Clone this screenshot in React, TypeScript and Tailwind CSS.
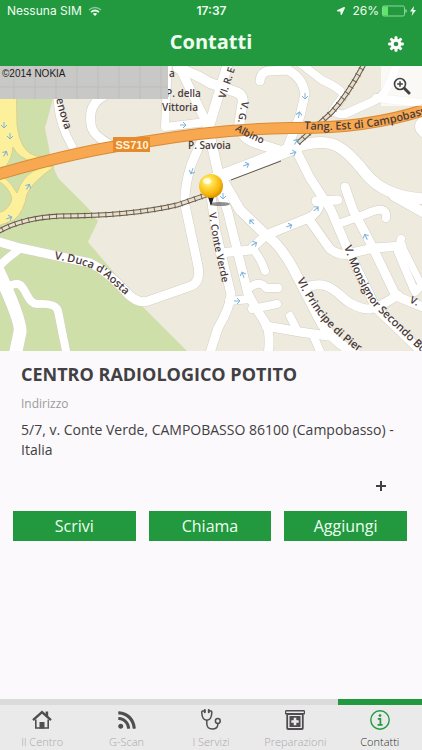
import type { ReactNode } from "react";
import { FaLocationArrow, FaRss } from "react-icons/fa";

interface Road {
  d: string;
  w: number;
}

const ROADS: Road[] = [
  { d: "M54 60 L58 104 Q60 126 72 146", w: 8 },
  { d: "M104 96 Q88 104 91 124 Q92 136 113 146", w: 9 },
  { d: "M168 60 L165 127 L206 122", w: 8 },
  { d: "M176 60 L209 128", w: 9 },
  { d: "M178 68 Q196 74 210 83 L236 92 Q245 95 242 106 L239 126 Q242 138 256 143 L284 152", w: 10 },
  { d: "M229 60 L211 120 L206 136", w: 10 },
  { d: "M260 81 Q261 72 268 71 L288 70 Q303 78 305 94 L300 116 L288 146", w: 9 },
  { d: "M296 60 L322 80 Q348 92 342 98 L333 110 Q336 115 345 114 L376 100 Q388 94 398 60", w: 8 },
  { d: "M376 98 L422 103", w: 8 },
  { d: "M428 118 Q416 122 420 130 L430 140", w: 8 },
  { d: "M207 128 L191 165 Q184 188 185 205 L198 266 Q201 282 191 286 L148 301 Q138 304 128 294 Q106 270 90 263 L20 248 L-4 241", w: 9 },
  { d: "M20 249 Q4 260 -4 270", w: 8 },
  { d: "M-4 266 Q22 322 20 332 L15 356", w: 13 },
  { d: "M8 294 Q7 284 17 284 C26 284 26 304 38 304 Q56 303 58 311 L67 356", w: 8 },
  { d: "M209 132 L218 172 L240 210 L266 235 Q282 246 296 274 L322 324 Q334 342 356 354", w: 10 },
  { d: "M214 179 L256 163 L296 147", w: 13 },
  { d: "M286 150 Q316 139 332 144 Q346 148 366 174 Q386 198 428 199", w: 11 },
  { d: "M394 196 L430 216", w: 10 },
  { d: "M296 150 L310 178 L331 210 L347 248 L376 308 L428 358", w: 9 },
  { d: "M345 187 L353 210 L372 246 L396 296 L430 310", w: 9 },
  { d: "M266 235 L311 217 Q324 206 316 201 L338 200", w: 9 },
  { d: "M266 235 L250 250 L220 253", w: 9 },
  { d: "M252 249 Q260 256 265 271", w: 8 },
  { d: "M216 186 Q226 200 231 225 L248 294 Q252 302 266 324 Q271 334 268 356", w: 9 },
  { d: "M211 196 L216 232 L231 294 Q230 308 218 328 L209 356", w: 9 },
  { d: "M229 301 L250 299", w: 8 },
  { d: "M248 289 Q260 279 266 288 L278 288", w: 8 },
  { d: "M252 309 L277 304", w: 8 },
  { d: "M266 326 L300 332 L328 336", w: 9 },
  { d: "M290 316 L298 332", w: 8 },
  { d: "M313 335 L322 356", w: 8 },
  { d: "M308 218 L330 249 Q342 258 356 252 L374 248 L402 246", w: 9 },
  { d: "M341 223 L366 214 Q388 204 386 218", w: 8 },
  { d: "M401 239 L398 252 L415 292 L430 276", w: 8 },
  { d: "M402 246 L422 286", w: 7 },
  { d: "M304 288 C330 278 336 294 350 303 C366 312 372 312 398 295", w: 9 },
];

const YELLOW_AREAS = [
  "M-2 60H16L17 125Q20 152 36 156L52 157L46 163L34 162Q18 158 13 147Q12 158 6 166L-2 168Z",
  "M-2 172L4 177Q12 184 17 193Q22 178 32 172L44 166L54 167Q32 182 27 194Q24 212 14 220L-2 226V213Q10 210 12 198Q8 186 -2 181Z",
];

const HIGHWAY = "M-4 175 Q80 150 150 141 Q220 129 290 128 Q370 129 430 108";

const RAILS = [
  "M-4 233 Q20 218 60 216 Q130 216 177 205 L212 193",
  "M298 143 L332 112 Q350 92 366 60",
];

// x, y, rotation of each one-way arrow
const ARROWS = [
  [4, 125, 90],
  [10, 136, 90],
  [5, 154, -60],
  [28, 187, -60],
  [9, 218, -20],
  [183, 125, 0],
  [192, 171, 110],
  [305, 96, 90],
  [299, 115, -80],
  [296, 142, -60],
  [293, 153, -15],
  [246, 165, -20],
  [223, 196, 90],
  [252, 222, -135],
  [289, 226, -20],
  [316, 209, -40],
  [254, 244, -30],
  [366, 237, -115],
  [243, 275, -110],
  [237, 301, 0],
];

const CURVED_LABELS = [
  { id: "duca", d: "M54 259 Q92 265 104 276 L140 308", text: "V. Duca d'Aosta", size: 11 },
  { id: "tang", d: "M304 129 Q365 134 432 112", text: "Tang. Est di Campobass", size: 11 },
  { id: "conte", d: "M209 213 L214 245 L226 300", text: "V. Conte Verde", size: 10 },
  { id: "principe", d: "M297 280 Q322 334 376 362", text: "VI. Principe di Pier", size: 11 },
  { id: "mons", d: "M344 247 Q362 296 378 311 L440 370", text: "V. Monsignor Secondo Bo", size: 11 },
  { id: "vg", d: "M242 101 L236 132", text: "V. G.", size: 10 },
  { id: "albino", d: "M235 130 Q246 138 276 149", text: "Albino", size: 10 },
  { id: "enova", d: "M56 99 L61 118 L68 138", text: "enova", size: 11 },
  { id: "ermin", d: "M225 99 L242 48", text: "VI. R. E", size: 10 },
  { id: "right", d: "M409 302 L440 318", text: "V.", size: 10 },
];

function TownMap() {
  return (
    <svg
      viewBox="0 66 422 285"
      className="block w-full"
      role="img"
      aria-label="Mappa di Campobasso"
      fontFamily="'Open Sans', 'Noto Sans', sans-serif"
    >
      <defs>
        <radialGradient id="pin" cx="0.38" cy="0.32" r="0.7">
          <stop offset="0" stopColor="#fff9c8" />
          <stop offset="0.3" stopColor="#ffe04a" />
          <stop offset="0.75" stopColor="#f7b50c" />
          <stop offset="1" stopColor="#d88f00" />
        </radialGradient>
      </defs>
      <rect y="66" width="422" height="285" fill="#eeeade" />
      <path
        d="M0 66H60L53 99L45 128L52 164L58 178L87 207L98 221L88 242L143 307L187 351H0Z"
        fill="#cfdfaa"
      />
      {YELLOW_AREAS.map((d) => (
        <path key={d} d={d} fill="#fdf09a" stroke="#dccf8e" />
      ))}

      <g fill="none" strokeLinecap="round" strokeLinejoin="round">
        {ROADS.map((r) => (
          <path key={r.d} d={r.d} stroke="#d3cfc3" strokeWidth={r.w + 1} />
        ))}
        {ROADS.map((r) => (
          <path key={r.d} d={r.d} stroke="#ffffff" strokeWidth={r.w} />
        ))}
      </g>

      <g fill="none">
        {RAILS.map((d) => (
          <g key={d}>
            <path d={d} stroke="#5f5850" strokeWidth="5" />
            <path d={d} stroke="#e4e0cc" strokeWidth="3" />
            <path d={d} stroke="#80604c" strokeWidth="6" strokeDasharray="1 6" />
          </g>
        ))}
        <path d="M231 180L281 161" stroke="#5f5850" strokeWidth="1" />
        <path d={HIGHWAY} stroke="#d98b35" strokeWidth="12" />
        <path d={HIGHWAY} stroke="#f7a850" strokeWidth="10" />
      </g>

      <g fill="none" stroke="#7fb4dc" strokeWidth="1">
        {ARROWS.map(([x, y, r]) => (
          <path
            key={`${x}-${y}`}
            d="M-3 0H3M0 -3L3 0L0 3"
            transform={`translate(${x} ${y}) rotate(${r})`}
          />
        ))}
      </g>

      <g fill="#4a3b3b" fontWeight="600">
        {CURVED_LABELS.map((l) => (
          <g key={l.id}>
            <path id={l.id} d={l.d} fill="none" />
            <text fontSize={l.size}>
              <textPath href={`#${l.id}`}>{l.text}</textPath>
            </text>
          </g>
        ))}
        <text x="169" y="77" fontSize="10">a</text>
        <text x="166" y="97" fontSize="10">P. della</text>
        <text x="162" y="111" fontSize="10">Vittoria</text>
        <text x="188" y="149" fontSize="10">P. Savoia</text>
      </g>

      <rect x="113" y="137" width="37" height="15" fill="#e8892b" />
      <text
        x="132"
        y="149"
        fontSize="11"
        fontWeight="700"
        textAnchor="middle"
        fill="#fff3dc"
        fontFamily="'Liberation Sans', sans-serif"
      >
        SS710
      </text>

      {/* Copyright strip */}
      <rect y="66" width="168" height="33" fill="#c8c8c6" />
      <path
        d="M14 66V99M35 66V99M56 66V99M77 66V99M98 66V99M119 66V99M140 66V99M161 66V99M0 87H168"
        stroke="#bdbdbb"
        fill="none"
      />
      <text x="2" y="77" fontSize="10" fill="#1c1c1c" fontFamily="'Liberation Sans', sans-serif">
        ©2014 NOKIA
      </text>

      {/* Position pin */}
      <ellipse cx="220" cy="204" rx="10" ry="2" fill="#55555b" opacity="0.65" />
      <path d="M207 194H215L211 206Z" fill="#222222" />
      <circle cx="211" cy="186" r="12" fill="url(#pin)" />
      <ellipse cx="207" cy="181" rx="4" ry="3" fill="#ffffff" opacity="0.7" />
    </svg>
  );
}

function WifiIcon() {
  return (
    <svg viewBox="0 0 14 11" className="h-[11px] w-[14px]" fill="none" stroke="currentColor">
      <path d="M1 4Q7 -1 13 4" strokeWidth="1.4" opacity="0.5" />
      <path d="M3 6.2Q7 2.8 11 6.2" strokeWidth="1.7" />
      <path d="M7 10L4.8 7.8Q7 6 9.2 7.8Z" fill="currentColor" stroke="none" />
    </svg>
  );
}

function BatteryIcon() {
  return (
    <svg viewBox="0 0 25 12" className="h-3 w-[25px]">
      <rect x="0.5" y="1" width="22" height="10" rx="1.5" fill="none" stroke="#8fd49b" />
      <rect x="1" y="1.5" width="5" height="9" fill="#62e46c" />
      <path d="M24 4.5V7.5" stroke="#8fd49b" strokeWidth="1.5" />
    </svg>
  );
}

function BoltIcon() {
  return (
    <svg viewBox="0 0 6 10" className="h-[10px] w-[6px]" fill="currentColor">
      <path d="M4 0L0 5.6H2.6L1.6 10L6 4H3.4Z" />
    </svg>
  );
}

function GearIcon() {
  return (
    <svg viewBox="-8 -8 16 16" className="size-4" fill="currentColor">
      {[0, 45, 90, 135].map((a) => (
        <rect key={a} x="-1.5" y="-7.8" width="3" height="15.6" rx="0.8" transform={`rotate(${a})`} />
      ))}
      <circle r="5.3" />
      <circle r="2.3" fill="#22993f" />
    </svg>
  );
}

function MagnifierIcon() {
  return (
    <svg viewBox="0 0 18 18" className="size-[18px]" fill="none" stroke="currentColor">
      <circle cx="7" cy="7" r="5.5" strokeWidth="1.6" />
      <path d="M4.2 7H9.8M7 4.2V9.8" strokeWidth="1.5" />
      <path d="M11.3 11.3L16 16" strokeWidth="3" strokeLinecap="round" />
    </svg>
  );
}

function HomeIcon() {
  return (
    <svg viewBox="0 0 20 20" className="size-5" fill="none" stroke="currentColor">
      <path d="M1 10.2L10 2.2L19 10.2" strokeWidth="2.4" />
      <path d="M13.6 1.5H16.2V7L13.6 5Z" fill="currentColor" stroke="none" />
      <path d="M3.8 9.5V18H16.2V9.5" strokeWidth="1.6" />
      <rect x="7.5" y="12" width="5" height="6.5" fill="currentColor" stroke="none" />
    </svg>
  );
}

function StethoscopeIcon() {
  return (
    <svg viewBox="0 0 22 22" className="size-[22px]" fill="none" stroke="currentColor" strokeWidth="1.5" strokeLinecap="round">
      <path d="M4.6 2H2.6Q1.6 2 1.8 4Q2.2 11 6.8 11.2Q11.4 11 11.8 4Q12 2 11 2H9" />
      <path d="M4.8 1V3.2M8.8 1V3.2" strokeWidth="2" />
      <path d="M6.8 11.5V15Q7.2 20 12.2 20Q17.6 20 17.8 15.5V14.6" />
      <circle cx="17.8" cy="12" r="2.4" />
    </svg>
  );
}

function JarIcon() {
  return (
    <svg viewBox="0 0 20 20" className="size-5" fill="none" stroke="currentColor">
      <rect x="0.5" y="0.8" width="19" height="3" rx="0.8" strokeWidth="1.4" />
      <rect x="2.2" y="4" width="15.6" height="15" rx="0.8" strokeWidth="1.8" />
      <rect x="4.5" y="6" width="11" height="11" fill="currentColor" stroke="none" />
      <path d="M10 7.8V15.2M6.3 11.5H13.7" stroke="#ebeaeb" strokeWidth="2.6" />
    </svg>
  );
}

function InfoIcon() {
  return (
    <svg viewBox="0 0 20 20" className="size-5" fill="none" stroke="currentColor">
      <circle cx="10" cy="10" r="9.2" strokeWidth="1.4" />
      <circle cx="10" cy="5.6" r="1.4" fill="currentColor" stroke="none" />
      <path d="M7.8 8.8H10.4V14.6M7.6 14.8H12.6" strokeWidth="1.7" />
    </svg>
  );
}

interface Tab {
  label: string;
  icon: ReactNode;
  active?: boolean;
}

const TABS: Tab[] = [
  { label: "Il Centro", icon: <HomeIcon /> },
  { label: "G-Scan", icon: <FaRss className="size-5" /> },
  { label: "I Servizi", icon: <StethoscopeIcon /> },
  { label: "Preparazioni", icon: <JarIcon /> },
  { label: "Contatti", icon: <InfoIcon />, active: true },
];

const ACTIONS = ["Scrivi", "Chiama", "Aggiungi"];

export default function App() {
  return (
    <div className="flex min-h-screen flex-col bg-[#fbf9fb] font-['Open_Sans','Noto_Sans',sans-serif] text-[#414042]">
      <header className="bg-[#22993f] text-[#effff0]">
        <div className="grid h-[22px] grid-cols-[1fr_auto_1fr] items-center pr-[6px] pl-[7px] font-[Inter,Roboto,sans-serif] text-xs">
          <div className="flex items-center gap-[6px]">
            <span>Nessuna SIM</span>
            <WifiIcon />
          </div>
          <span className="font-semibold">17:37</span>
          <div className="flex items-center justify-end gap-[3px]">
            <FaLocationArrow className="mr-1 size-2" />
            <span>26%</span>
            <BatteryIcon />
            <BoltIcon />
          </div>
        </div>
        <div className="grid h-11 grid-cols-[1fr_auto_1fr] items-center px-[18px] pb-1">
          <h1 className="col-start-2 text-xl font-bold">Contatti</h1>
          <button type="button" aria-label="Impostazioni" className="mt-1 justify-self-end text-white">
            <GearIcon />
          </button>
        </div>
      </header>

      <div className="relative">
        <TownMap />
        <button
          type="button"
          aria-label="Ingrandisci mappa"
          className="absolute top-0 right-0 flex h-10 w-[41px] items-center justify-center bg-white/70 text-[#414042]"
        >
          <MagnifierIcon />
        </button>
      </div>

      <main className="flex flex-col">
        <section className="pt-[11px] pr-3 pl-[21px]">
          <h2 className="text-lg leading-6 font-bold">CENTRO RADIOLOGICO POTITO</h2>
          <p className="mt-[10px] text-xs leading-4 text-[#9b999b]">Indirizzo</p>
          <p className="mt-2 text-sm leading-5">
            5/7, v. Conte Verde, CAMPOBASSO 86100 (Campobasso) - Italia
          </p>
          <div className="mt-4 flex justify-end pr-[19px]">
            <button type="button" aria-label="Mostra altro" className="flex size-5 items-center justify-center">
              <svg viewBox="0 0 10 10" className="size-[10px]" stroke="currentColor" strokeWidth="2">
                <path d="M0 5H10M5 0V10" />
              </svg>
            </button>
          </div>
        </section>
        <div className="mt-[15px] grid grid-cols-3 gap-[13px] pr-[15px] pl-[13px]">
          {ACTIONS.map((action) => (
            <button key={action} type="button" className="h-[30px] bg-[#22993f] text-base text-[#effff0]">
              {action}
            </button>
          ))}
        </div>
      </main>

      <nav className="mt-auto grid grid-cols-5 bg-[#ebeaeb]">
        {TABS.map((tab) => (
          <a
            key={tab.label}
            href="#"
            aria-current={tab.active ? "page" : undefined}
            className={
              tab.active
                ? "flex flex-col items-center border-t-[6px] border-[#22993f] text-[#22993f]"
                : "flex flex-col items-center border-t-[6px] border-[#dcdbdc] text-[#4f4d4f]"
            }
          >
            <span className="flex h-[29px] items-center">{tab.icon}</span>
            <span
              className={
                tab.active
                  ? "text-[11px] leading-4 font-light text-[#2b2a2c]"
                  : "text-[11px] leading-4 font-light text-[#a9a7a9]"
              }
            >
              {tab.label}
            </span>
          </a>
        ))}
      </nav>
    </div>
  );
}
